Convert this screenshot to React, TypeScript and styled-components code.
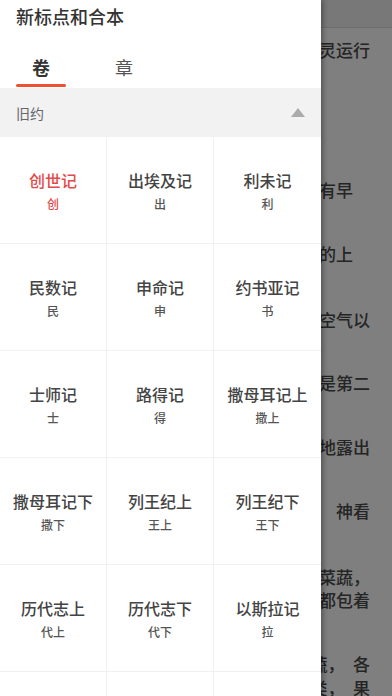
import * as React from 'react'
import styled, { createGlobalStyle } from 'styled-components'

const GlobalStyle = createGlobalStyle`
    html, body {
        margin: 0;
        padding: 0;
        height: 100%;
        overflow: hidden;
        background: #ffffff;
        font-family: "Noto Sans CJK SC", "Noto Sans", sans-serif;
    }
    #root {
        height: 100%;
    }
`

interface IBook {
    name: string
    abbr: string
}

const books: IBook[] = [
    { name: '创世记', abbr: '创' },
    { name: '出埃及记', abbr: '出' },
    { name: '利未记', abbr: '利' },
    { name: '民数记', abbr: '民' },
    { name: '申命记', abbr: '申' },
    { name: '约书亚记', abbr: '书' },
    { name: '士师记', abbr: '士' },
    { name: '路得记', abbr: '得' },
    { name: '撒母耳记上', abbr: '撒上' },
    { name: '撒母耳记下', abbr: '撒下' },
    { name: '列王纪上', abbr: '王上' },
    { name: '列王纪下', abbr: '王下' },
    { name: '历代志上', abbr: '代上' },
    { name: '历代志下', abbr: '代下' },
    { name: '以斯拉记', abbr: '拉' },
    { name: '尼希米记', abbr: '尼' },
    { name: '以斯帖记', abbr: '斯' },
    { name: '约伯记', abbr: '伯' },
]

// tails of the reading page lines peeking out from under the drawer
const pageLines: { text: string, space: number }[] = [
    { text: '灵运行', space: 10 },
    { text: '有早\u3000', space: 117 },
    { text: '的上\u3000', space: 41 },
    { text: '空气以', space: 43 },
    { text: '是第二', space: 40 },
    { text: '地露出', space: 41 },
    { text: '\u3000神看', space: 41 },
    { text: '菜蔬，', space: 43 },
    { text: '都包着', space: 0 },
    { text: '蔬，\u3000各', space: 41 },
    { text: '类，\u3000果', space: 1 },
]

const Screen = styled('div')`
    position: relative;
    width: 100%;
    height: 100%;
    overflow: hidden;
`

const Page = styled('div')`
    display: flex;
    flex-flow: column nowrap;
    height: 100%;
`

const PageBar = styled('div')`
    flex-shrink: 0;
    height: 27px;
    background: #f0f0f0;
    border-bottom: 1px solid #dcdcdc;
`

const PageLine = styled('div')<{ $space: number }>`
    flex-shrink: 0;
    display: flex;
    justify-content: flex-end;
    margin-top: ${p => p.$space}px;
    padding-right: 22px;
    font-size: 17px;
    line-height: 23px;
    font-weight: 500;
    color: #4a4a4a;
    white-space: nowrap;
`

const Overlay = styled('div')`
    position: absolute;
    inset: 0;
    background: rgba(0, 0, 0, 0.5);
`

const Drawer = styled('div')`
    position: absolute;
    top: 0;
    left: 0;
    bottom: 0;
    width: 321px;
    display: flex;
    flex-flow: column nowrap;
    background: #ffffff;
    box-shadow: 2px 0 5px rgba(0, 0, 0, 0.35);
    overflow: hidden;
`

const Title = styled('div')`
    flex-shrink: 0;
    padding: 5px 16px 1px;
    font-size: 18px;
    line-height: 22px;
    font-weight: 500;
    color: #333333;
`

const Tabs = styled('div')`
    flex-shrink: 0;
    display: flex;
    flex-flow: row nowrap;
    gap: 33px;
    padding: 0 16px;
    height: 60px;
`

const Tab = styled('div')<{ $active: boolean }>`
    display: flex;
    flex-flow: column nowrap;
    align-items: center;
    width: 50px;
    padding-top: 27px;
    font-size: 18px;
    line-height: 24px;
    font-weight: ${p => p.$active ? 700 : 400};
    color: ${p => p.$active ? '#333333' : '#555555'};

    &::after {
        content: '';
        display: block;
        width: 50px;
        height: 3px;
        margin-top: 5px;
        border-radius: 2px;
        background: ${p => p.$active ? '#ee5233' : 'transparent'};
    }
`

const SectionHead = styled('div')`
    flex-shrink: 0;
    display: flex;
    flex-flow: row nowrap;
    align-items: center;
    justify-content: space-between;
    height: 49px;
    padding: 0 16px;
    background: #f2f2f2;
    font-size: 14px;
    color: #666666;
`

const Caret = styled('span')`
    width: 0;
    height: 0;
    border-left: 7px solid transparent;
    border-right: 7px solid transparent;
    border-bottom: 9px solid #ababab;
`

const Grid = styled('div')`
    flex-shrink: 0;
    display: grid;
    grid-template-columns: repeat(3, 107px);
    grid-auto-rows: 107px;
`

const Cell = styled('div')`
    display: flex;
    flex-flow: column nowrap;
    align-items: center;
    justify-content: center;
    gap: 5px;
    border-right: 1px solid #f0f0f0;
    border-bottom: 1px solid #f0f0f0;

    &:nth-child(3n) {
        border-right: none;
    }
`

const BookName = styled('div')<{ $selected: boolean }>`
    font-size: 16px;
    line-height: 22px;
    font-weight: 500;
    color: ${p => p.$selected ? '#e34a4a' : '#444444'};
    white-space: nowrap;
`

const BookAbbr = styled('div')<{ $selected: boolean }>`
    font-size: 12px;
    line-height: 16px;
    font-weight: 500;
    color: ${p => p.$selected ? '#e34a4a' : '#555555'};
`

const App = () => {
    const selected = '创世记'
    return (
        <Screen>
            <GlobalStyle />
            <Page>
                <PageBar />
                {pageLines.map(line => (
                    <PageLine key={line.text} $space={line.space}>{line.text}</PageLine>
                ))}
            </Page>
            <Overlay />
            <Drawer>
                <Title>新标点和合本</Title>
                <Tabs>
                    <Tab $active={true}>卷</Tab>
                    <Tab $active={false}>章</Tab>
                </Tabs>
                <SectionHead>
                    <span>旧约</span>
                    <Caret />
                </SectionHead>
                <Grid>
                    {books.map(book => (
                        <Cell key={book.name}>
                            <BookName $selected={book.name === selected}>{book.name}</BookName>
                            <BookAbbr $selected={book.name === selected}>{book.abbr}</BookAbbr>
                        </Cell>
                    ))}
                </Grid>
            </Drawer>
        </Screen>
    )
}

export default App
